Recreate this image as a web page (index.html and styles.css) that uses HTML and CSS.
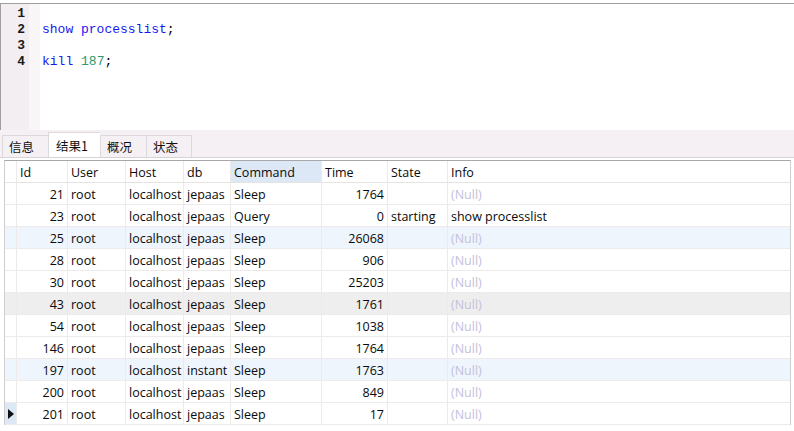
FILE: index.html
```html
<!DOCTYPE html>
<html>
<head>
<meta charset="utf-8">
<link rel="stylesheet" href="styles.css">
</head>
<body>
<div class="editor">
  <div class="gutter">
    <div class="ln">1</div>
    <div class="ln">2</div>
    <div class="ln">3</div>
    <div class="ln">4</div>
  </div>
  <div class="fold"></div>
  <div class="code">
    <div class="line">&nbsp;</div>
    <div class="line"><span class="kw">show processlist</span>;</div>
    <div class="line">&nbsp;</div>
    <div class="line"><span class="kw">kill</span> <span class="num">187</span>;</div>
  </div>
</div>
<div class="tabs">
  <div class="tab">信息</div>
  <div class="tab active">结果1</div>
  <div class="tab">概况</div>
  <div class="tab">状态</div>
</div>
<div class="grid">
  <div class="row head">
    <div class="c ind"></div>
    <div class="c">Id</div>
    <div class="c">User</div>
    <div class="c">Host</div>
    <div class="c">db</div>
    <div class="c sel">Command</div>
    <div class="c">Time</div>
    <div class="c">State</div>
    <div class="c">Info</div>
  </div>
  <div class="row">
    <div class="c ind"></div><div class="c r">21</div><div class="c">root</div><div class="c">localhost</div><div class="c">jepaas</div><div class="c">Sleep</div><div class="c r">1764</div><div class="c"></div><div class="c null">(Null)</div>
  </div>
  <div class="row">
    <div class="c ind"></div><div class="c r">23</div><div class="c">root</div><div class="c">localhost</div><div class="c">jepaas</div><div class="c">Query</div><div class="c r">0</div><div class="c">starting</div><div class="c">show processlist</div>
  </div>
  <div class="row blue">
    <div class="c ind"></div><div class="c r">25</div><div class="c">root</div><div class="c">localhost</div><div class="c">jepaas</div><div class="c">Sleep</div><div class="c r">26068</div><div class="c"></div><div class="c null">(Null)</div>
  </div>
  <div class="row">
    <div class="c ind"></div><div class="c r">28</div><div class="c">root</div><div class="c">localhost</div><div class="c">jepaas</div><div class="c">Sleep</div><div class="c r">906</div><div class="c"></div><div class="c null">(Null)</div>
  </div>
  <div class="row">
    <div class="c ind"></div><div class="c r">30</div><div class="c">root</div><div class="c">localhost</div><div class="c">jepaas</div><div class="c">Sleep</div><div class="c r">25203</div><div class="c"></div><div class="c null">(Null)</div>
  </div>
  <div class="row gray">
    <div class="c ind"></div><div class="c r">43</div><div class="c">root</div><div class="c">localhost</div><div class="c">jepaas</div><div class="c">Sleep</div><div class="c r">1761</div><div class="c"></div><div class="c null">(Null)</div>
  </div>
  <div class="row">
    <div class="c ind"></div><div class="c r">54</div><div class="c">root</div><div class="c">localhost</div><div class="c">jepaas</div><div class="c">Sleep</div><div class="c r">1038</div><div class="c"></div><div class="c null">(Null)</div>
  </div>
  <div class="row">
    <div class="c ind"></div><div class="c r">146</div><div class="c">root</div><div class="c">localhost</div><div class="c">jepaas</div><div class="c">Sleep</div><div class="c r">1764</div><div class="c"></div><div class="c null">(Null)</div>
  </div>
  <div class="row blue">
    <div class="c ind"></div><div class="c r">197</div><div class="c">root</div><div class="c">localhost</div><div class="c">instant</div><div class="c">Sleep</div><div class="c r">1763</div><div class="c"></div><div class="c null">(Null)</div>
  </div>
  <div class="row">
    <div class="c ind"></div><div class="c r">200</div><div class="c">root</div><div class="c">localhost</div><div class="c">jepaas</div><div class="c">Sleep</div><div class="c r">849</div><div class="c"></div><div class="c null">(Null)</div>
  </div>
  <div class="row">
    <div class="c ind cur"><span class="arrow"></span></div><div class="c r">201</div><div class="c">root</div><div class="c">localhost</div><div class="c">jepaas</div><div class="c">Sleep</div><div class="c r">17</div><div class="c"></div><div class="c null">(Null)</div>
  </div>
</div>
</body>
</html>
```

FILE: styles.css
```css
html, body {
  margin: 0;
  padding: 0;
  background: #ffffff;
}
body {
  padding-top: 3px;
  font-family: "Open Sans", "Noto Sans CJK SC", sans-serif;
}
.editor {
  display: flex;
  height: 126px;
  border-top: 1px solid #a0a0a0;
  border-left: 1px solid #a0a0a0;
  background: #ffffff;
}
.gutter {
  width: 28px;
  padding-top: 2px;
  background: #f3eef1;
  font-family: "Liberation Mono", monospace;
  font-size: 13px;
  font-weight: bold;
  line-height: 16px;
  color: #1a1a1a;
}
.ln {
  text-align: right;
  padding-right: 4px;
}
.fold {
  width: 11px;
  background: #f9f6f8;
}
.code {
  padding-left: 2px;
  padding-top: 2px;
  font-family: "Liberation Mono", monospace;
  font-size: 13px;
  line-height: 16px;
  color: #000;
}
.kw { color: #1818f0; }
.num { color: #2e9a6c; }

.tabs {
  display: flex;
  align-items: flex-end;
  height: 27px;
  padding-left: 2px;
  background: #f5f0f4;
  border-bottom: 1px solid #d6d2d5;
  font-family: "Noto Sans CJK SC", sans-serif;
  font-size: 12.5px;
  color: #111;
}
.tab {
  box-sizing: border-box;
  width: 46px;
  height: 22px;
  padding-left: 6px;
  line-height: 22px;
  border: 1px solid #dcd8db;
  border-bottom: none;
  border-right: none;
  background: #f5f0f4;
}
.tab:nth-child(4) { border-right: 1px solid #dcd8db; }
.tab.active {
  width: 52px;
  height: 25px;
  line-height: 26px;
  background: #ffffff;
  padding-left: 7px;
}
.grid {
  margin: 2px 0 0 4px;
  width: 785px;
  border-top: 1px solid #a8a8a8;
  border-left: 1px solid #cfcfcf;
  border-right: 1px solid #cfcfcf;
  font-size: 12.5px;
  color: #0a0a0a;
}
.row {
  display: grid;
  grid-template-columns: 12px 51px 58px 58px 47px 91px 66px 60px 1fr;
  height: 22px;
  box-sizing: border-box;
  border-bottom: 1px solid #eeeaea;
}
.row.head { border-bottom: 1px solid #e6e3e3; }
.row.blue { background: #eef5fd; }
.row.gray { background: #eeeeee; }
.c {
  box-sizing: border-box;
  border-right: 1px solid #eeeaea;
  padding: 1px 3px 0;
  line-height: 21px;
  white-space: nowrap;
  overflow: hidden;
}
.row.head .c { padding-top: 2px; line-height: 19px; }
.c:last-child { border-right: none; }
.c.r { text-align: right; }
.c.sel { background: #dde8f6; }
.c.null { color: #c4c0dc; }
.c.ind { padding: 0; position: relative; }
.c.cur { background: #dde8f6; }
.arrow {
  position: absolute;
  left: 3px;
  top: 6px;
  width: 0;
  height: 0;
  border-top: 5px solid transparent;
  border-bottom: 5px solid transparent;
  border-left: 6px solid #111;
}
```
